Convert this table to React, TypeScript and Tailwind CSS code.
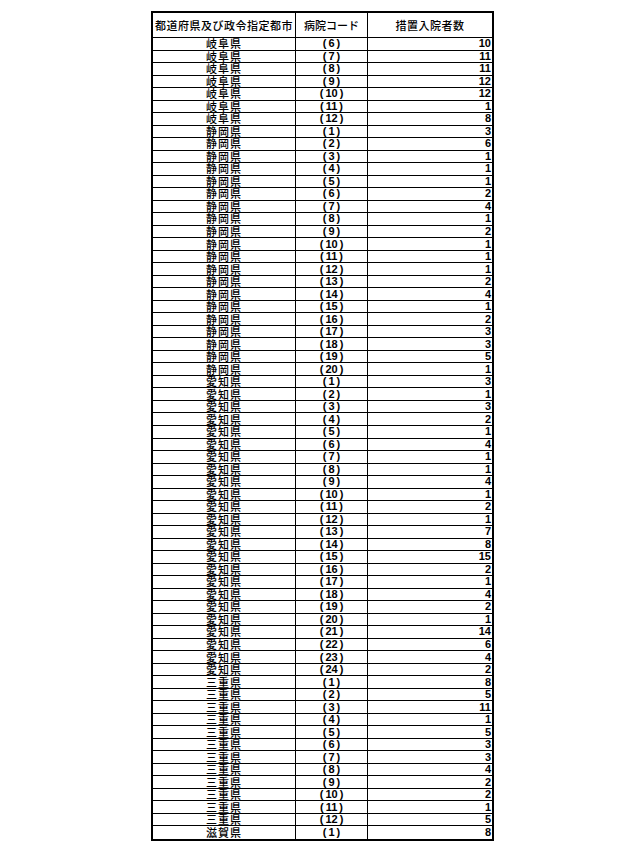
const rows: [string, number, number][] = [
  ["岐阜県", 6, 10], ["岐阜県", 7, 11], ["岐阜県", 8, 11], ["岐阜県", 9, 12],
  ["岐阜県", 10, 12], ["岐阜県", 11, 1], ["岐阜県", 12, 8],
  ["静岡県", 1, 3], ["静岡県", 2, 6], ["静岡県", 3, 1], ["静岡県", 4, 1],
  ["静岡県", 5, 1], ["静岡県", 6, 2], ["静岡県", 7, 4], ["静岡県", 8, 1],
  ["静岡県", 9, 2], ["静岡県", 10, 1], ["静岡県", 11, 1], ["静岡県", 12, 1],
  ["静岡県", 13, 2], ["静岡県", 14, 4], ["静岡県", 15, 1], ["静岡県", 16, 2],
  ["静岡県", 17, 3], ["静岡県", 18, 3], ["静岡県", 19, 5], ["静岡県", 20, 1],
  ["愛知県", 1, 3], ["愛知県", 2, 1], ["愛知県", 3, 3], ["愛知県", 4, 2],
  ["愛知県", 5, 1], ["愛知県", 6, 4], ["愛知県", 7, 1], ["愛知県", 8, 1],
  ["愛知県", 9, 4], ["愛知県", 10, 1], ["愛知県", 11, 2], ["愛知県", 12, 1],
  ["愛知県", 13, 7], ["愛知県", 14, 8], ["愛知県", 15, 15], ["愛知県", 16, 2],
  ["愛知県", 17, 1], ["愛知県", 18, 4], ["愛知県", 19, 2], ["愛知県", 20, 1],
  ["愛知県", 21, 14], ["愛知県", 22, 6], ["愛知県", 23, 4], ["愛知県", 24, 2],
  ["三重県", 1, 8], ["三重県", 2, 5], ["三重県", 3, 11], ["三重県", 4, 1],
  ["三重県", 5, 5], ["三重県", 6, 3], ["三重県", 7, 3], ["三重県", 8, 4],
  ["三重県", 9, 2], ["三重県", 10, 2], ["三重県", 11, 1], ["三重県", 12, 5],
  ["滋賀県", 1, 8],
];

const jp = "font-['Noto_Sans_CJK_JP','Noto_Sans',sans-serif]";
const num = "font-['Liberation_Sans_Narrow','Liberation_Sans',sans-serif]";

export default function App() {
  return (
    <main className="min-h-[852px] w-[644px] bg-white pl-[151px] pt-[11px] text-black">
      <div className="w-[343px] border-2 border-black">
        {/* 見出し */}
        <div className={`grid h-[25px] grid-cols-[143px_72px_124px] border-b border-black text-[11px] font-medium leading-none ${jp}`}>
          <div className="flex items-center justify-center border-r border-black tracking-[0.5px]">都道府県及び政令指定都市</div>
          <div className="flex items-center justify-center border-r border-black">病院コード</div>
          <div className="flex items-center justify-center tracking-[0.5px]">措置入院者数</div>
        </div>
        {rows.map(([pref, code, count], i) => (
          <div
            key={i}
            className={`grid h-[12.53px] grid-cols-[143px_72px_124px] text-[11px] leading-none ${
              i < rows.length - 1 ? "border-b border-black" : ""
            }`}
          >
            <div className={`flex items-center justify-center border-r border-black font-medium tracking-[1px] ${jp}`}>
              {pref}
            </div>
            <div className={`flex items-center justify-center gap-[2px] border-r border-black font-bold ${num}`}>
              <span>(</span>
              <span>{code}</span>
              <span>)</span>
            </div>
            <div className={`flex items-center justify-end pr-[1px] font-bold ${num}`}>{count}</div>
          </div>
        ))}
      </div>
    </main>
  );
}
